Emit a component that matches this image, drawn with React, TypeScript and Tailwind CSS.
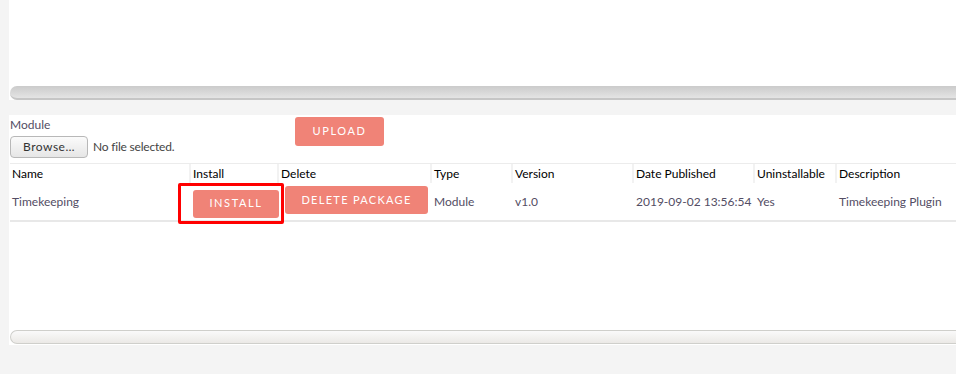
import React from "react"

const cols = [
  { label: "Name", w: "w-[181px]" },
  { label: "Install", w: "w-[88px]" },
  { label: "Delete", w: "w-[153px]" },
  { label: "Type", w: "w-[81px]" },
  { label: "Version", w: "w-[121px]" },
  { label: "Date Published", w: "w-[121px]" },
  { label: "Uninstallable", w: "w-[82px]" },
  { label: "Description", w: "flex-1" },
]

function ScrollBar({ dark }: { dark?: boolean }) {
  return (
    <div
      className={
        dark
          ? "h-[14px] rounded-l-[7px] border-b-2 border-[#c6c6c6] bg-gradient-to-b from-[#cbcbcb] to-[#e4e4e4]"
          : "h-[14px] rounded-l-[7px] border border-r-0 border-[#cfcfcb] bg-gradient-to-b from-[#fafafa] to-[#ebe9e6]"
      }
    />
  )
}

export default function App() {
  return (
    <div className="w-[956px] h-[374px] bg-[#f4f4f4] pl-[9px] font-['Lato','Liberation_Sans',sans-serif] text-[12px] text-[#534d64] overflow-hidden">
      <div className="h-[100px] bg-white pl-px pt-[86px]">
        <ScrollBar dark />
      </div>
      <div className="mt-[15px] h-[230px] bg-white pl-px flex flex-col">
        <div className="flex h-[48px]">
          <div className="w-[285px] pt-[3px]">
            <div className="leading-[14px]">Module</div>
            <div className="mt-[4px] flex items-center">
              <button className="h-[22px] w-[78px] rounded-[4px] border border-[#b8b8b8] bg-gradient-to-b from-[#fbfbfb] to-[#e6e6e6] text-[12px] text-[#333] tracking-[0.5px]">
                Browse…
              </button>
              <span className="ml-[5px] text-[#444] tracking-[-0.2px]">No file selected.</span>
            </div>
          </div>
          <div className="pt-[2px]">
            <button className="h-[29px] w-[89px] rounded-[3px] bg-[#f08377] text-white text-[11px] tracking-[1.6px]">
              UPLOAD
            </button>
          </div>
        </div>
        <div className="border-t border-[#ececec] flex h-[20px] items-center text-black">
          {cols.map((c, i) => (
            <div
              key={c.label}
              className={`${c.w} h-full flex items-center ${i < cols.length - 1 ? "border-r-2 border-[#f2f2f2]" : ""} pl-[2px]`}
            >
              {c.label}
            </div>
          ))}
        </div>
        <div className="flex h-[39px] items-center border-b-2 border-[#e8e8e8]">
          <div className="w-[181px] pl-[2px]">Timekeeping</div>
          <div className="w-[88px] relative h-full flex items-center pl-[2px]">
            <div className="absolute left-[-13px] top-0 h-[41px] w-[106px] border-[3px] border-[#ff0000] rounded-[2px]" />
            <button className="h-[28px] w-[86px] rounded-[3px] bg-[#f08377] text-white text-[11px] tracking-[1.6px] mt-[4px]">
              INSTALL
            </button>
          </div>
          <div className="w-[153px] h-full flex items-center pl-[6px]">
            <button className="h-[28px] w-[143px] rounded-[3px] bg-[#f08377] text-white text-[11px] tracking-[1.3px] -mt-[3px]">
              DELETE PACKAGE
            </button>
          </div>
          <div className="w-[81px] pl-[2px]">Module</div>
          <div className="w-[121px] pl-[2px]">v1.0</div>
          <div className="w-[121px] pl-[2px]">2019-09-02 13:56:54</div>
          <div className="w-[82px] pl-[2px]">Yes</div>
          <div className="flex-1 pl-[2px]">Timekeeping Plugin</div>
        </div>
        <div className="flex-1" />
        <div className="mb-px">
          <ScrollBar />
        </div>
      </div>
    </div>
  )
}
